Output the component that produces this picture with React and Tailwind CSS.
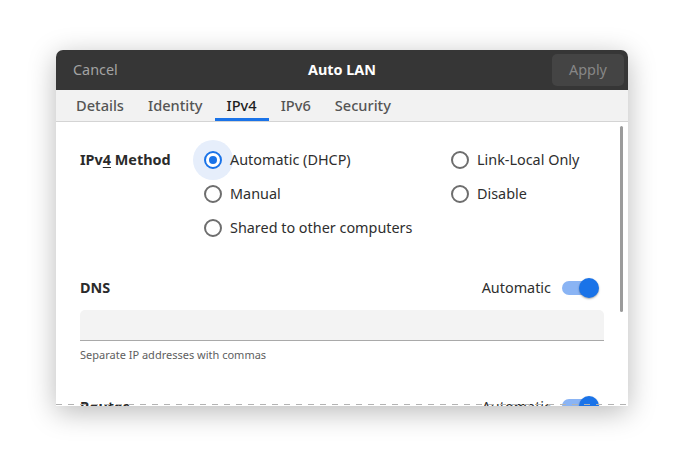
import React, { useState } from 'react';

const tabs = ['Details', 'Identity', 'IPv4', 'IPv6', 'Security'];

const Radio = ({ checked, label, halo }) => (
  <div className="flex items-center h-[34px] gap-2">
    <div className="relative w-[18px] h-[18px] flex items-center justify-center">
      {halo && <div className="absolute -inset-[11px] rounded-full bg-[#e6eefb]"></div>}
      <div
        className={`relative w-[18px] h-[18px] rounded-full border-2 flex items-center justify-center bg-white ${
          checked ? 'border-[#1a73e8]' : 'border-[#6e6e6e]'
        }`}
      >
        {checked && <div className="w-[8px] h-[8px] rounded-full bg-[#1a73e8]"></div>}
      </div>
    </div>
    <span className="relative text-[14.4px] text-[#2e2e2e]">{label}</span>
  </div>
);

const Toggle = () => (
  <div className="relative w-[37px] h-[20px] flex items-center">
    <div className="w-[35px] h-[14px] rounded-full bg-[#8ab4f4]"></div>
    <div className="absolute right-0 top-0 w-[20px] h-[20px] rounded-full bg-[#1a73e8] shadow-[0_1px_2px_rgba(0,0,0,0.35)]"></div>
  </div>
);

const App = () => {
  const [activeTab] = useState('IPv4');

  return (
    <div
      className="w-full h-[469px] bg-white pt-[50px] pl-[56px]"
      style={{ fontFamily: '"Noto Sans", "Open Sans", sans-serif' }}
    >
      <div className="w-[572px] h-[356px] flex flex-col rounded-t-[7px] overflow-hidden shadow-[0_6px_28px_rgba(0,0,0,0.28)] bg-white">
        {/* header bar */}
        <div className="h-10 bg-[#363636] grid grid-cols-[1fr_auto_1fr] items-center">
          <div className="pl-[17px] pb-px text-[14.4px] text-[#a3a3a3]">Cancel</div>
          <div className="pb-px text-[14.4px] font-bold text-white">Auto LAN</div>
          <div className="flex justify-end pr-[4px]">
            <div className="w-[72px] h-[32px] rounded-[5px] bg-[#444444] flex items-center justify-center text-[14.4px] text-[#878787]">
              Apply
            </div>
          </div>
        </div>

        {/* tabs */}
        <div className="h-[32px] bg-[#f2f2f2] border-b border-[#d4d4d4] flex pl-[8px]">
          {tabs.map((t) => (
            <div key={t} className="relative px-3 flex items-center">
              <span className={`text-[14.6px] font-medium ${t === activeTab ? 'text-[#1e1e1e]' : 'text-[#555555]'}`}>{t}</span>
              {t === activeTab && <div className="absolute left-0 right-0 bottom-0 h-[3px] bg-[#1a73e8]"></div>}
            </div>
          ))}
        </div>

        {/* content */}
        <div className="relative flex-1 overflow-hidden px-6 pt-[21px]">
          <div className="flex">
            <div className="w-[124px] h-[34px] flex items-center text-[14.4px] font-bold text-[#2b2b2b]">
              <span>
                IPv<span className="underline underline-offset-2">4</span> Method
              </span>
            </div>
            <div className="w-[247px] flex flex-col">
              <Radio checked halo label="Automatic (DHCP)" />
              <Radio label="Manual" />
              <Radio label="Shared to other computers" />
            </div>
            <div className="flex flex-col">
              <Radio label="Link-Local Only" />
              <Radio label="Disable" />
            </div>
          </div>

          <div className="mt-[26px] h-[34px] flex items-center justify-between pr-[5px]">
            <span className="text-[14.4px] font-bold text-[#2b2b2b]">DNS</span>
            <div className="flex items-center gap-[11px]">
              <span className="text-[14.4px] text-[#2e2e2e]">Automatic</span>
              <Toggle />
            </div>
          </div>
          <div className="mt-[5px] h-[31px] rounded-t-[5px] bg-[#f3f3f3] border-b border-[#a9a9a9]"></div>
          <div className="mt-[6px] text-[11px] text-[#5e5e5e]">Separate IP addresses with commas</div>

          <div className="mt-[26px] h-[34px] flex items-center justify-between pr-[5px]">
            <span className="text-[14.4px] font-bold text-[#2b2b2b]">Routes</span>
            <div className="flex items-center gap-[11px]">
              <span className="text-[14.4px] text-[#2e2e2e]">Automatic</span>
              <Toggle />
            </div>
          </div>

          {/* scrollbar */}
          <div className="absolute right-[5px] top-[4px] w-[3px] h-[186px] rounded-full bg-[#9b9b9b]"></div>
          {/* dashed scroll edge */}
          <div className="absolute left-0 right-0 bottom-[1px] h-px bg-[repeating-linear-gradient(90deg,#b3b3b3_0_6px,transparent_6px_12px)]"></div>
        </div>
      </div>
    </div>
  );
};

export default App;
